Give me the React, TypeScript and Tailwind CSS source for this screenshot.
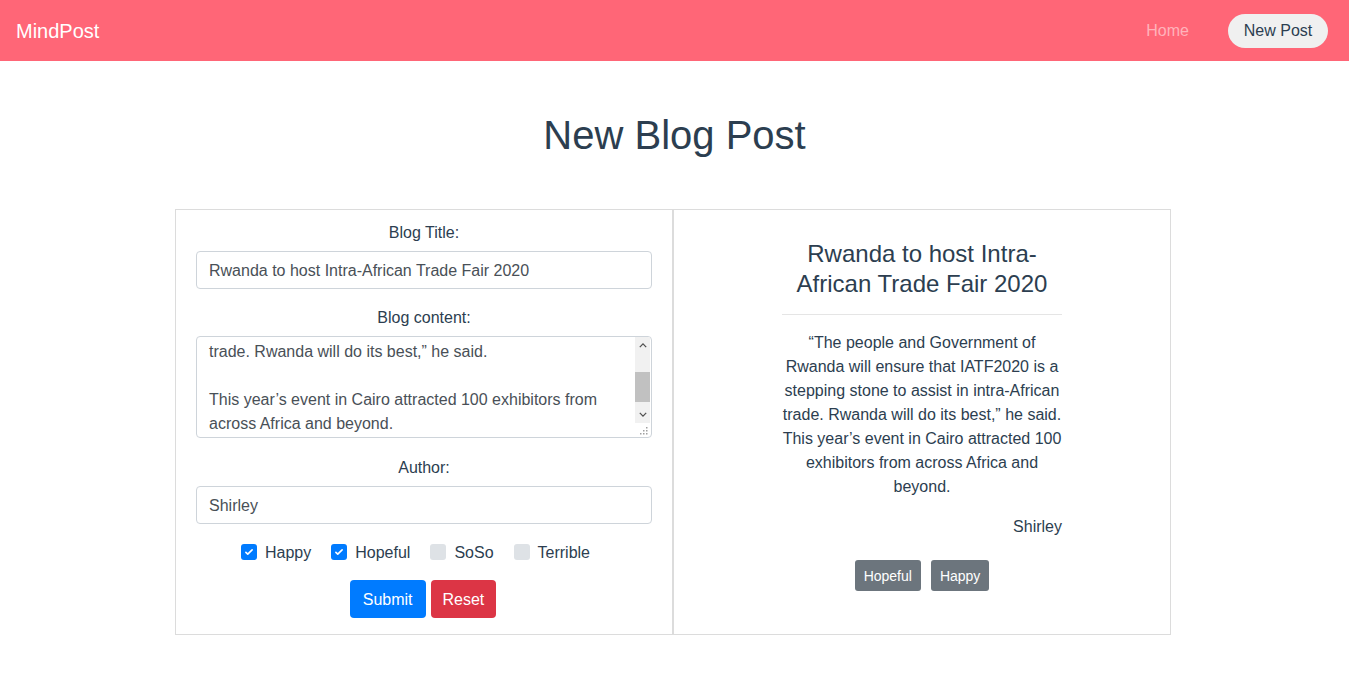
import { FunctionComponent } from "react";

const Check = () => (
  <svg viewBox="0 0 16 16" className="w-[10px] h-[10px]" fill="none">
    <path d="M3 8.5l3 3 7-7" stroke="#fff" strokeWidth="2.6" strokeLinecap="round" strokeLinejoin="round" />
  </svg>
);

const MoodBox: FunctionComponent<{ label: string; checked?: boolean }> = ({ label, checked }) => (
  <label className="flex flex-row items-center gap-[8px]">
    <span
      className={`w-4 h-4 rounded-[3px] flex items-center justify-center ${checked ? "bg-[#007bff]" : "bg-[#dee2e6]"}`}
    >
      {checked && <Check />}
    </span>
    <span className="pt-px -mb-px">{label}</span>
  </label>
);

const Arrow = ({ up }: { up?: boolean }) => (
  <svg viewBox="0 0 10 6" className="w-[8px] h-[5px]">
    <path d={up ? "M1 5l4-4 4 4" : "M1 1l4 4 4-4"} stroke="#505050" strokeWidth="1.6" fill="none" />
  </svg>
);

const App: FunctionComponent = () => {
  return (
    <div className="min-h-[685px] bg-white text-[#2c3e50] font-['Liberation_Sans',Arial,sans-serif]">
      <nav className="h-[61px] bg-[#ff6677] flex flex-row items-center justify-between pl-4 pr-[21px]">
        <div className="text-[20px] text-white leading-none">MindPost</div>
        <div className="flex flex-row items-center gap-[39px] text-base">
          <span className="text-[#ffb3bb]">Home</span>
          <span className="h-[34px] w-[100px] rounded-full bg-[#f0f0f0] flex items-center justify-center text-[#2c3e50]">
            New Post
          </span>
        </div>
      </nav>

      <h1 className="mt-[50px] text-center text-[40px] leading-[48px]">New Blog Post</h1>

      <div className="mt-[50px] flex flex-row justify-center pr-[3px]">
        <div className="w-[996px] flex flex-row text-base leading-6">
          <form className="w-[498px] border border-[#dcdcdc] px-5 pt-[10px] pb-[16px] flex flex-col items-stretch">
            <div className="text-center pt-px -mb-px">Blog Title:</div>
            <div className="mt-[7px] h-[38px] border border-[#ced4da] rounded-[4px] px-3 pt-px flex items-center text-[#495057]">
              Rwanda to host Intra-African Trade Fair 2020
            </div>

            <div className="mt-4 text-center pt-px -mb-px">Blog content:</div>
            <div className="mt-[7px] h-[102px] border border-[#ced4da] rounded-[4px] flex flex-row overflow-hidden">
              <div className="flex-1 pl-3 pt-[3px] text-[#495057]">
                <div>trade. Rwanda will do its best,” he said.</div>
                <div>&nbsp;</div>
                <div>This year’s event in Cairo attracted 100 exhibitors from</div>
                <div>across Africa and beyond.</div>
              </div>
              <div className="w-[15px] mr-[1px] flex flex-col">
                <div className="flex-1 bg-[#f1f1f1] flex flex-col">
                  <div className="h-[17px] flex items-center justify-center">
                    <Arrow up />
                  </div>
                  <div className="h-[18px]" />
                  <div className="h-[30px] bg-[#c1c1c1]" />
                  <div className="flex-1" />
                  <div className="h-[17px] flex items-center justify-center">
                    <Arrow />
                  </div>
                </div>
                <div className="h-[14px] flex items-end justify-end pb-[2px] pr-[2px]">
                  <svg viewBox="0 0 8 8" className="w-[8px] h-[8px]">
                    <rect x="6" y="0" width="1.5" height="1.5" fill="#a0a0a0" />
                    <rect x="3" y="3" width="1.5" height="1.5" fill="#a0a0a0" />
                    <rect x="6" y="3" width="1.5" height="1.5" fill="#a0a0a0" />
                    <rect x="0" y="6" width="1.5" height="1.5" fill="#a0a0a0" />
                    <rect x="3" y="6" width="1.5" height="1.5" fill="#a0a0a0" />
                    <rect x="6" y="6" width="1.5" height="1.5" fill="#a0a0a0" />
                  </svg>
                </div>
              </div>
            </div>

            <div className="mt-[17px] text-center pt-px -mb-px">Author:</div>
            <div className="mt-[7px] h-[38px] border border-[#ced4da] rounded-[4px] px-3 pt-px flex items-center text-[#495057]">
              Shirley
            </div>

            <div className="mt-4 flex flex-row justify-center gap-5 pr-[17px] text-[#2c3e50]">
              <MoodBox label="Happy" checked />
              <MoodBox label="Hopeful" checked />
              <MoodBox label="SoSo" />
              <MoodBox label="Terrible" />
            </div>

            <div className="mt-4 flex flex-row justify-center gap-[5px] pr-[2px]">
              <button type="button" className="h-[38px] px-[13px] pt-px rounded-[4px] bg-[#007bff] text-white">
                Submit
              </button>
              <button type="button" className="h-[38px] px-3 pt-px rounded-[4px] bg-[#dc3545] text-white">
                Reset
              </button>
            </div>
          </form>

          <div className="w-[498px] border border-[#dcdcdc] pt-[29px] flex flex-col items-center">
            <div className="w-[280px] flex flex-col">
              <h2 className="text-center text-[24px] leading-[30px]">
                Rwanda to host Intra-African Trade Fair 2020
              </h2>
              <hr className="mt-[15px] border-t border-[#e5e5e5]" />
              <p className="mt-[16px] -mb-px text-center">
                “The people and Government of Rwanda will ensure that IATF2020 is a stepping stone to
                assist in intra-African trade. Rwanda will do its best,” he said. This year’s event in
                Cairo attracted 100 exhibitors from across Africa and beyond.
              </p>
              <div className="mt-4 pt-px -mb-px text-right">Shirley</div>
              <div className="mt-[22px] flex flex-row justify-center gap-[10px]">
                <span className="h-[31px] px-[9px] rounded-[3px] bg-[#6c757d] text-white text-sm flex items-center">
                  Hopeful
                </span>
                <span className="h-[31px] px-[9px] rounded-[3px] bg-[#6c757d] text-white text-sm flex items-center">
                  Happy
                </span>
              </div>
            </div>
          </div>
        </div>
      </div>
    </div>
  );
};

export default App;
